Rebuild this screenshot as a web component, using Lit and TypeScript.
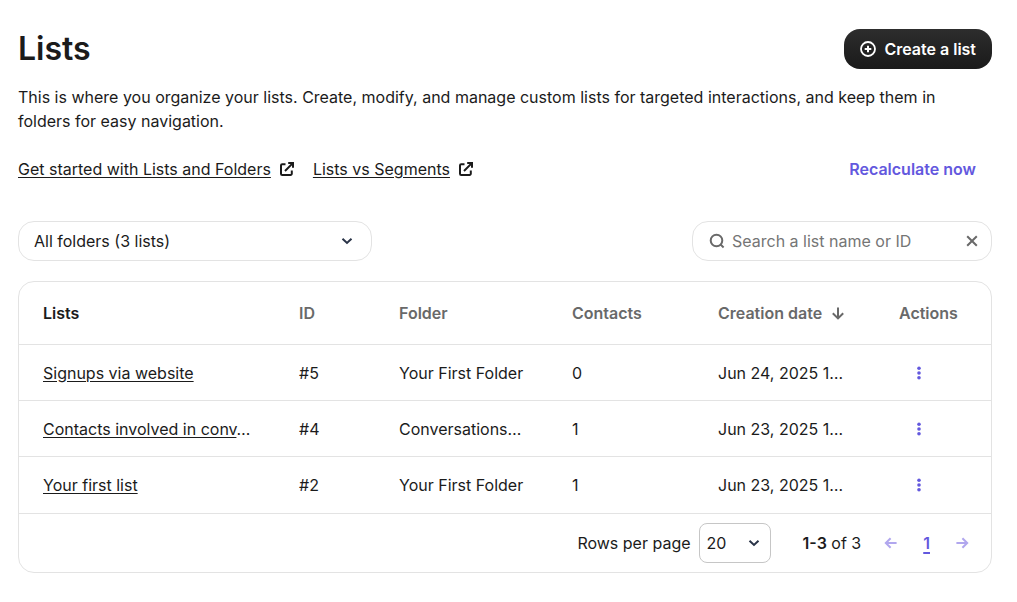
import { LitElement, html, css, svg, nothing } from "lit";
import { customElement, state } from "lit/decorators.js";

interface ListRow {
  name: string;
  /** The name is shortened and is followed by an ellipsis outside the link. */
  short?: boolean;
  id: number;
  folder: string;
  contacts: number;
  created: string;
}

const ROWS: ListRow[] = [
  { name: "Signups via website", id: 5, folder: "Your First Folder", contacts: 0, created: "Jun 24, 2025 1…" },
  { name: "Contacts involved in conv", short: true, id: 4, folder: "Conversations…", contacts: 1, created: "Jun 23, 2025 1…" },
  { name: "Your first list", id: 2, folder: "Your First Folder", contacts: 1, created: "Jun 23, 2025 1…" },
];

const shapes = {
  plus: svg`<circle cx="8" cy="8" r="7" stroke-width="1.8"/><path d="M8 4.7v6.6M4.7 8h6.6"/>`,
  external: svg`<path d="M6.5 3.2H3.2A1.2 1.2 0 0 0 2 4.4v8.4A1.2 1.2 0 0 0 3.2 14h8.4a1.2 1.2 0 0 0 1.2-1.2V9.5M6 10l7.6-7.6M9.2 2H14v4.8"/>`,
  chevron: svg`<path d="M3.5 5.8l4.5 4.2 4.5-4.2"/>`,
  search: svg`<circle cx="7.5" cy="7.5" r="5.8"/><path d="M11.6 11.6l3 2.8"/>`,
  close: svg`<path d="M3.2 3.2l9.6 9.6M12.8 3.2l-9.6 9.6"/>`,
  down: svg`<path d="M8 2.6v10.6M2.8 8.2l5.2 5.2 5.2-5.2"/>`,
  left: svg`<path d="M13.6 8H3M7.6 3.2L2.8 8l4.8 4.8"/>`,
  right: svg`<path d="M2.4 8H13M8.4 3.2L13.2 8l-4.8 4.8"/>`,
  dots: svg`<g fill="currentColor" stroke="none"><circle cx="8" cy="3.3" r="1.8"/><circle cx="8" cy="8" r="1.8"/><circle cx="8" cy="12.7" r="1.8"/></g>`,
};

const icon = (name: keyof typeof shapes) => html`<svg
  class="icon"
  viewBox="0 0 16 16"
  width="16"
  height="16"
  fill="none"
  stroke="currentColor"
  stroke-width="2"
  aria-hidden="true"
>${shapes[name]}</svg>`;

@customElement("app-root")
export class AppRoot extends LitElement {
  @state() private query = "";

  static styles = css`
    :host {
      display: block;
      padding: 28px 25px 28px 18px;
      font: 400 16px/24px Inter, sans-serif;
      color: #1b1b1b;
    }
    *, *::before, *::after { box-sizing: border-box; }
    button, input, select { font: inherit; color: inherit; margin: 0; }
    button { border: 0; padding: 0; background: none; cursor: pointer; }
    a { color: inherit; text-underline-offset: 2px; }
    .icon { flex: none; display: block; }

    .top, .links, .filters { display: flex; align-items: center; justify-content: space-between; }
    h1 { margin: 0; font-size: 32px; line-height: 40px; font-weight: 600; }
    .create {
      display: flex; align-items: center; gap: 8px; height: 40px; padding: 0 16px;
      border-radius: 16px; background: linear-gradient(#2d2d2d, #1a1a1a); color: #fff; font-weight: 600;
      margin-top: 1px;
    }
    .intro { margin: 16px 0 24px; }
    .help { display: flex; gap: 18px; }
    .help span { display: flex; align-items: center; gap: 8px; }
    .recalc { padding: 0 16px; color: #6358de; font-weight: 600; }

    .filters { margin: 40px 0 20px; gap: 24px; }
    .select { display: grid; align-items: center; }
    .select select, .select .icon { grid-area: 1 / 1; }
    .select .icon { justify-self: end; pointer-events: none; color: #293347; }
    select { appearance: none; width: 100%; height: 40px; background: #fff; border: 1px solid #e3e3e3; }
    .folders { width: 354px; }
    .folders select { border-radius: 16px; padding: 0 40px 0 15px; }
    .folders .icon { margin-right: 17px; }
    .search {
      display: flex; align-items: center; gap: 7px; width: 300px; height: 40px; padding: 0 11px 0 16px;
      border: 1px solid #e3e3e3; border-radius: 16px; color: #696969;
    }
    .search input { flex: 1; min-width: 0; border: 0; padding: 0; outline: 0; background: none; }
    .search input::placeholder { color: #757575; opacity: 1; }

    .card { border: 1px solid #e3e3e3; border-radius: 16px; }
    table { width: 100%; table-layout: fixed; border-collapse: separate; border-spacing: 0; }
    .c-name { width: 256px; }
    .c-id { width: 100px; }
    .c-folder { width: 173px; }
    .c-contacts { width: 146px; }
    .c-date { width: 181px; }
    .c-actions { width: 116px; }
    th, td {
      padding: 0 16px 0 24px; text-align: left; overflow: hidden; white-space: nowrap; text-overflow: ellipsis;
      border-bottom: 1px solid #e3e3e3;
    }
    th { height: 63px; font-weight: 600; color: #696969; }
    th:first-child { color: #1b1b1b; }
    td { height: 56px; }
    tbody tr:last-child td { border-bottom: 0; }
    .sort { display: flex; align-items: center; gap: 8px; }
    .more { display: block; margin-left: 12px; color: #6358de; }

    .pager {
      display: flex; align-items: center; justify-content: flex-end;
      padding: 9px 21px 9px 24px; border-top: 1px solid #e3e3e3;
    }
    .rows { margin-right: 8px; }
    .size { width: 72px; margin-right: 32px; }
    .size select { border-color: #c6c6c6; border-radius: 8px; padding: 0 30px 0 7px; }
    .size .icon { margin-right: 9px; }
    .range { margin-right: 22px; }
    .range b { font-weight: 600; }
    .arrow { color: #b1a7ee; }
    .page { margin: 0 24px; color: #6358de; font-weight: 600; text-underline-offset: 3px; text-decoration-thickness: 2px; }
  `;

  render() {
    const rows = ROWS.filter((r) => (r.name + r.id).toLowerCase().includes(this.query.toLowerCase()));
    return html`
      <header class="top">
        <h1>Lists</h1>
        <button class="create" type="button">${icon("plus")}Create a list</button>
      </header>
      <p class="intro">
        This is where you organize your lists. Create, modify, and manage custom lists for targeted interactions, and
        keep them in folders for easy navigation.
      </p>
      <div class="links">
        <nav class="help" aria-label="Help">
          <span><a href="#start">Get started with Lists and Folders</a>${icon("external")}</span>
          <span><a href="#segments">Lists vs Segments</a>${icon("external")}</span>
        </nav>
        <button class="recalc" type="button">Recalculate now</button>
      </div>
      <div class="filters">
        <div class="select folders">
          <select aria-label="Folder"><option>All folders (3 lists)</option></select>
          ${icon("chevron")}
        </div>
        <div class="search">
          ${icon("search")}
          <input
            type="text"
            aria-label="Search a list name or ID"
            placeholder="Search a list name or ID"
            .value=${this.query}
            @input=${(e: Event) => (this.query = (e.target as HTMLInputElement).value)}
          />
          <button type="button" aria-label="Clear search" @click=${() => (this.query = "")}>${icon("close")}</button>
        </div>
      </div>
      <section class="card">
        <table>
          <colgroup>
            <col class="c-name" /><col class="c-id" /><col class="c-folder" />
            <col class="c-contacts" /><col class="c-date" /><col class="c-actions" />
          </colgroup>
          <thead>
            <tr>
              <th>Lists</th>
              <th>ID</th>
              <th>Folder</th>
              <th>Contacts</th>
              <th><button class="sort" type="button">Creation date ${icon("down")}</button></th>
              <th>Actions</th>
            </tr>
          </thead>
          <tbody>
            ${rows.map(
              (r) => html`<tr>
                <td><a href="#list-${r.id}">${r.name}</a>${r.short ? "…" : nothing}</td>
                <td>#${r.id}</td>
                <td>${r.folder}</td>
                <td>${r.contacts}</td>
                <td>${r.created}</td>
                <td><button class="more" type="button" aria-label="Actions for ${r.name}">${icon("dots")}</button></td>
              </tr>`,
            )}
          </tbody>
        </table>
        <footer class="pager">
          <label class="rows" for="page-size">Rows per page</label>
          <div class="select size">
            <select id="page-size"><option>20</option></select>
            ${icon("chevron")}
          </div>
          <span class="range"><b>1-3</b> of 3</span>
          <button class="arrow" type="button" aria-label="Previous page">${icon("left")}</button>
          <a class="page" href="#page-1">1</a>
          <button class="arrow" type="button" aria-label="Next page">${icon("right")}</button>
        </footer>
      </section>
    `;
  }
}
